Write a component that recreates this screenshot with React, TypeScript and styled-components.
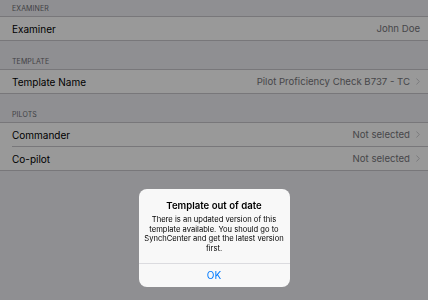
import React from 'react';
import styled, { createGlobalStyle } from 'styled-components';

const GlobalStyle = createGlobalStyle`
  html, body {
    margin: 0;
    padding: 0;
    background: #efeff4;
    font-family: Inter, "Liberation Sans", Arial, sans-serif;
    -webkit-font-smoothing: antialiased;
  }
`;

const Page = styled.div`
  width: 428px;
  height: 300px;
  background: #efeff4;
  overflow: hidden;
`;

const Section = styled.section`
  & + & {
    margin-top: 12px;
  }
`;

const SectionHeader = styled.div`
  height: 16px;
  padding: 0 12px 3px;
  box-sizing: border-box;
  display: flex;
  align-items: flex-end;
  font-size: 7px;
  letter-spacing: 0.1px;
  color: #6d6d72;
  text-transform: uppercase;
`;

const Group = styled.div`
  background: #fff;
  border-top: 1px solid #c8c7cc;
  border-bottom: 1px solid #c8c7cc;
`;

const Row = styled.div`
  position: relative;
  height: 23px;
  display: flex;
  align-items: center;
  padding: 0 8px 0 12px;

  & + &::before {
    content: '';
    position: absolute;
    top: -1px;
    left: 12px;
    right: 0;
    border-top: 1px solid #c8c7cc;
  }
  & + & {
    margin-top: 1px;
  }
`;

const Label = styled.span`
  flex: 1;
  font-size: 10px;
  color: #000;
`;

const Value = styled.span`
  font-size: 9.6px;
  color: #76767b;
`;

const Chevron = styled.svg`
  margin-left: 6px;
  width: 4px;
  height: 7px;
`;

const Overlay = styled.div`
  position: fixed;
  inset: 0;
  background: rgba(0, 0, 0, 0.4);
  display: flex;
  justify-content: center;
  align-items: flex-start;
  padding-top: 189px;
`;

const Alert = styled.div`
  width: 151px;
  background: #f8f8f8;
  border-radius: 8px;
  overflow: hidden;
  text-align: center;
`;

const AlertBody = styled.div`
  padding: 10px 4px 9px;
`;

const AlertTitle = styled.div`
  font-size: 9.6px;
  font-weight: 600;
  color: #000;
  line-height: 13px;
  margin-bottom: 3px;
`;

const AlertMessage = styled.div`
  font-size: 7.6px;
  line-height: 9.7px;
  color: #000;
  white-space: nowrap;
`;

const AlertButton = styled.button`
  display: block;
  width: 100%;
  height: 24px;
  border: none;
  border-top: 1px solid #dbdbdf;
  background: transparent;
  font-family: inherit;
  font-size: 10px;
  color: #007aff;
  padding: 0;
`;

const ChevronIcon = () => (
  <Chevron viewBox="0 0 4 7">
    <path d="M0.5 0.5 L3.3 3.5 L0.5 6.5" fill="none" stroke="#c7c7cc" strokeWidth="0.9" />
  </Chevron>
);

type Item = { label: string; value: string; chevron?: boolean };

const sections: { title: string; items: Item[] }[] = [
  { title: 'Examiner', items: [{ label: 'Examiner', value: 'John Doe' }] },
  {
    title: 'Template',
    items: [{ label: 'Template Name', value: 'Pilot Proficiency Check B737 - TC', chevron: true }],
  },
  {
    title: 'Pilots',
    items: [
      { label: 'Commander', value: 'Not selected', chevron: true },
      { label: 'Co-pilot', value: 'Not selected', chevron: true },
    ],
  },
];

const App: React.FC = () => {
  return (
    <>
      <GlobalStyle />
      <Page>
        {sections.map((s) => (
          <Section key={s.title}>
            <SectionHeader>{s.title}</SectionHeader>
            <Group>
              {s.items.map((it) => (
                <Row key={it.label}>
                  <Label>{it.label}</Label>
                  <Value>{it.value}</Value>
                  {it.chevron && <ChevronIcon />}
                </Row>
              ))}
            </Group>
          </Section>
        ))}
      </Page>
      <Overlay>
        <Alert>
          <AlertBody>
            <AlertTitle>Template out of date</AlertTitle>
            <AlertMessage>
              There is an updated version of this
              <br />
              template available. You should go to
              <br />
              SynchCenter and get the latest version
              <br />
              first.
            </AlertMessage>
          </AlertBody>
          <AlertButton>OK</AlertButton>
        </Alert>
      </Overlay>
    </>
  );
};

export default App;
